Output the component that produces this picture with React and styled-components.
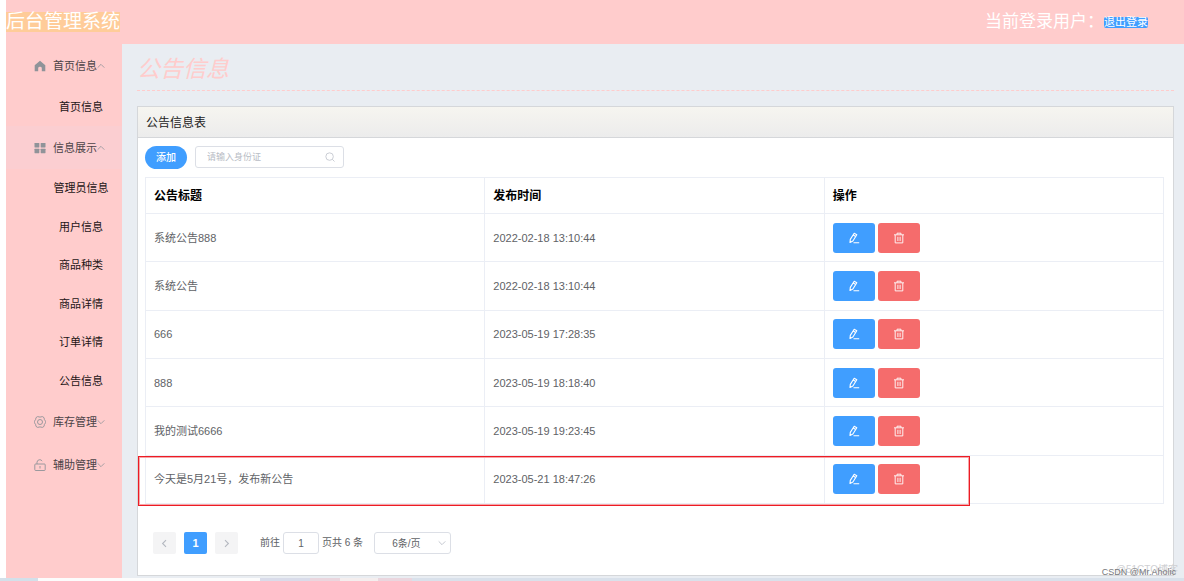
import React, { useState } from "react";
import styled, { createGlobalStyle, css } from "styled-components";

const GlobalStyle = createGlobalStyle`
  * {
    box-sizing: border-box;
  }

  body {
    margin: 0;
    background: #ffffff;
    font-family: "Liberation Sans", "Noto Sans CJK SC", sans-serif;
    font-size: 11px;
    line-height: 16px;
    color: #606266;
  }

  button,
  input,
  select {
    font-family: inherit;
  }
`;

const Page = styled.div`
  position: relative;
  display: flex;
  flex-direction: column;
  min-height: 100vh;
  overflow: hidden;
`;

const Header = styled.header`
  display: flex;
  align-items: center;
  justify-content: space-between;
  height: 44px;
  margin-left: 6px;
  padding-right: 36px;
  background: #ffcccc;
  color: #ffffff;
`;

const SystemTitle = styled.h1`
  margin: 0;
  font-size: 19px;
  font-weight: 400;
  line-height: 20px;
  background: #ffcc99;
`;

const UserInfo = styled.div`
  display: flex;
  align-items: center;
  font-size: 17px;
  line-height: 20px;
`;

const LogoutButton = styled.button`
  padding: 0;
  border: 0;
  border-radius: 2px;
  background: #409eff;
  color: #ffffff;
  font-size: 11px;
  line-height: 11px;
`;

const Body = styled.div`
  display: flex;
  flex: 1;
  margin-left: 6px;
`;

const Sidebar = styled.nav`
  flex: 0 0 116px;
  background: #ffcccc;
`;

const MenuTitle = styled.button`
  display: flex;
  align-items: center;
  width: 100%;
  height: 43px;
  padding: 0 0 0 28px;
  border: 0;
  background: ${(props) => (props.$active ? "#fbced1" : "transparent")};
  color: #4b4347;
  font-size: 11px;
  line-height: 16px;

  svg:first-child {
    margin-right: 7px;
  }
`;

const SubMenu = styled.ul`
  display: grid;
  grid-auto-rows: 1fr;
  height: ${(props) => props.$height}px;
  margin: 0;
  padding: 0 0 0 34px;
  list-style: none;
`;

const SubMenuItem = styled.li`
  display: flex;
  align-items: center;
  justify-content: center;

  a {
    color: #1c1416;
    text-decoration: none;
  }
`;

const Main = styled.main`
  flex: 1;
  min-width: 0;
  padding: 0 10px 2px 15px;
  background: #e9edf2;
`;

const PageTitle = styled.h2`
  margin: 0 0 15px;
  padding: 9px 0 5px;
  border-bottom: 1px dashed #ffcccc;
  color: #ffcccc;
  font-size: 23px;
  font-style: italic;
  font-weight: 400;
  line-height: 32px;
`;

const Card = styled.section`
  border: 1px solid #d5d7da;
  background: #ffffff;
`;

const CardHeader = styled.h3`
  margin: 0;
  padding: 2px 8px 0;
  border-bottom: 1px solid #d5d7da;
  background: linear-gradient(#f6f5f0, #ececec);
  color: #222222;
  font-size: 12px;
  font-weight: 400;
  line-height: 28px;
`;

const CardBody = styled.div`
  padding: 8px 9px 21px 7px;
`;

const Toolbar = styled.div`
  display: flex;
  align-items: flex-start;
  gap: 8px;
  margin-bottom: 8px;
`;

const AddButton = styled.button`
  width: 42px;
  height: 23px;
  padding: 0;
  border: 0;
  border-radius: 12px;
  background: #409eff;
  color: #ffffff;
  font-size: 10px;
  font-weight: 500;
  line-height: 20px;
`;

const SearchBox = styled.label`
  display: flex;
  align-items: center;
  width: 149px;
  height: 22px;
  padding: 0 8px 0 11px;
  border: 1px solid #dcdfe6;
  border-radius: 3px;
  color: #c0c4cc;
`;

const SearchInput = styled.input`
  flex: 1;
  min-width: 0;
  padding: 0;
  border: 0;
  outline: 0;
  background: transparent;
  font-size: 9px;

  &::placeholder {
    color: #b8bcc5;
  }
`;

const TableWrapper = styled.div`
  position: relative;
`;

const Table = styled.table`
  width: 100%;
  height: 327px;
  table-layout: fixed;
  border-collapse: collapse;

  th,
  td {
    padding: 0 8px;
    border: 1px solid #ebeef5;
    text-align: left;
  }

  th {
    height: 36px;
    color: #000000;
    font-size: 12px;
    font-weight: 700;
  }
`;

const Actions = styled.div`
  display: flex;
  gap: 3px;
`;

const IconButton = styled.button`
  display: flex;
  align-items: center;
  justify-content: center;
  width: 42px;
  height: 30px;
  padding: 0;
  border: 0;
  border-radius: 3px;
  color: #ffffff;
  background: ${(props) => (props.$danger ? "#f56c6c" : "#409eff")};
`;

const RowMarker = styled.div`
  position: absolute;
  left: -7px;
  right: 19%;
  bottom: -2px;
  height: 50px;
  border: 1px solid #ec1c24;
  box-shadow: inset 0 0 0 1px #f8a5a8;
  pointer-events: none;
`;

const Pagination = styled.div`
  display: flex;
  align-items: center;
  margin-top: 28px;
  padding-left: 8px;
  font-size: 10px;
`;

const PageButton = styled.button`
  display: flex;
  align-items: center;
  justify-content: center;
  width: 23px;
  height: 22px;
  margin-right: 8px;
  padding: 0;
  border: 0;
  border-radius: 2px;
  background: #f4f4f5;
  color: #b4b8c0;
  font-size: 11px;
  font-weight: 700;

  ${(props) =>
    props.$current &&
    css`
      background: #409eff;
      color: #ffffff;
    `}
`;

const Jumper = styled.label`
  display: flex;
  align-items: center;
  gap: 3px;
  margin: 0 11px 0 14px;
`;

const JumperInput = styled.input`
  width: 36px;
  height: 22px;
  padding: 0;
  border: 1px solid #dcdfe6;
  border-radius: 3px;
  color: #606266;
  font-size: 10px;
  text-align: center;
`;

const SizeSelect = styled.div`
  position: relative;
  color: #c0c4cc;

  select {
    width: 77px;
    height: 22px;
    padding: 0 0 0 17px;
    appearance: none;
    border: 1px solid #dcdfe6;
    border-radius: 3px;
    background: #ffffff;
    color: #606266;
    font-size: 10px;
  }

  svg {
    position: absolute;
    top: 7px;
    right: 5px;
    pointer-events: none;
  }
`;

const Taskbar = styled.footer`
  display: flex;
  height: 3px;
  background: #d9e1eb;
`;

const TaskbarPart = styled.div`
  flex: 0 0 ${(props) => props.$width}px;
  background: ${(props) => props.$color};
`;

const Watermark = styled.span`
  position: absolute;
  right: 8px;
  bottom: 1px;
  color: #77787b;
  font-size: 9px;
  white-space: nowrap;
`;

const SiteWatermark = styled(Watermark)`
  right: 6px;
  bottom: 3px;
  color: #cfd0d3;
  font-size: 10px;
`;

const Icon = ({ size = 12, children, ...rest }) => (
  <svg
    width={size}
    height={size}
    viewBox="0 0 12 12"
    fill="none"
    stroke="currentColor"
    aria-hidden="true"
    {...rest}
  >
    {children}
  </svg>
);

const HomeIcon = () => (
  <Icon stroke="none">
    <path
      d="M6 .8 11.3 5.2V11.3H7.8V8.2Q7.8 6.8 6 6.8T4.2 8.2V11.3H.7V5.2Z"
      fill="#909399"
    />
  </Icon>
);

const GridIcon = () => (
  <Icon stroke="none" fill="#909399">
    <rect x=".5" y="1" width="4.8" height="4.4" rx=".4" />
    <rect x="6.7" y="1" width="4.8" height="4.4" rx=".4" />
    <rect x=".5" y="6.8" width="4.8" height="4.4" rx=".4" />
    <rect x="6.7" y="6.8" width="4.8" height="4.4" rx=".4" />
  </Icon>
);

const SettingIcon = () => (
  <Icon stroke="#909399" strokeWidth=".9" strokeLinejoin="round">
    <path d="M3.6.6Q6 1.6 8.4.6L10 1.6Q10.1 4 11.6 5.2V6.8Q10.1 8 10 10.4L8.4 11.4Q6 10.4 3.6 11.4L2 10.4Q1.9 8 .4 6.8V5.2Q1.9 4 2 1.6Z" />
    <circle cx="6" cy="6" r="2.5" />
  </Icon>
);

const UnlockIcon = () => (
  <Icon stroke="#909399" strokeWidth=".9">
    <rect x=".8" y="5" width="10.4" height="6.5" rx=".8" />
    <path d="M3 5V3.2A2.8 2.8 0 0 1 8.2 2.1M6 7V9.5" />
  </Icon>
);

const ArrowIcon = ({ open }) => (
  <Icon size={8} stroke="#909399" strokeWidth="1.2">
    <path d={open ? "M1 8.5 6 3.5 11 8.5" : "M1 3.5 6 8.5 11 3.5"} />
  </Icon>
);

const EditIcon = () => (
  <Icon strokeWidth="1.1" strokeLinejoin="round">
    <path d="M6.2 1.2 8.8 2.7 4.9 9 2 10.5 2.3 7.4ZM5.2 3 7.7 4.5M5.5 10.7H11.2" />
  </Icon>
);

const DeleteIcon = () => (
  <Icon strokeWidth=".9">
    <path d="M1 2.8H11M4 2.6V1.2H8V2.6M2.2 3V10.9H9.8V3M4.9 4.8V9M7.1 4.8V9" />
  </Icon>
);

const menus = [
  { title: "首页信息", icon: HomeIcon, open: true, height: 39, items: ["首页信息"] },
  {
    title: "信息展示",
    icon: GridIcon,
    open: true,
    active: true,
    height: 231,
    items: ["管理员信息", "用户信息", "商品种类", "商品详情", "订单详情", "公告信息"],
  },
  { title: "库存管理", icon: SettingIcon, items: [] },
  { title: "辅助管理", icon: UnlockIcon, items: [] },
];

const notices = [
  { title: "系统公告888", time: "2022-02-18 13:10:44" },
  { title: "系统公告", time: "2022-02-18 13:10:44" },
  { title: "666", time: "2023-05-19 17:28:35" },
  { title: "888", time: "2023-05-19 18:18:40" },
  { title: "我的测试6666", time: "2023-05-19 19:23:45" },
  { title: "今天是5月21号，发布新公告", time: "2023-05-21 18:47:26" },
];

const App = () => {
  const [keyword, setKeyword] = useState("");
  const [page, setPage] = useState("1");

  return (
    <>
      <GlobalStyle />
      <Page>
        <Header>
          <SystemTitle>后台管理系统</SystemTitle>
          <UserInfo>
            当前登录用户：
            <LogoutButton>退出登录</LogoutButton>
          </UserInfo>
        </Header>
        <Body>
          <Sidebar>
            {menus.map(({ title, icon: MenuIcon, open, active, height, items }) => (
              <div key={title}>
                <MenuTitle $active={active}>
                  <MenuIcon />
                  {title}
                  <ArrowIcon open={open} />
                </MenuTitle>
                {open && (
                  <SubMenu $height={height}>
                    {items.map((item) => (
                      <SubMenuItem key={item}>
                        <a href="#">{item}</a>
                      </SubMenuItem>
                    ))}
                  </SubMenu>
                )}
              </div>
            ))}
          </Sidebar>
          <Main>
            <PageTitle>公告信息</PageTitle>
            <Card>
              <CardHeader>公告信息表</CardHeader>
              <CardBody>
                <Toolbar>
                  <AddButton>添加</AddButton>
                  <SearchBox>
                    <SearchInput
                      aria-label="请输入身份证"
                      placeholder="请输入身份证"
                      value={keyword}
                      onChange={(e) => setKeyword(e.target.value)}
                    />
                    <Icon size={10}>
                      <circle cx="5.5" cy="5.5" r="4.5" />
                      <path d="M8.8 8.8 11.4 11.4" />
                    </Icon>
                  </SearchBox>
                </Toolbar>
                <TableWrapper>
                  <Table>
                    <thead>
                      <tr>
                        <th>公告标题</th>
                        <th>发布时间</th>
                        <th>操作</th>
                      </tr>
                    </thead>
                    <tbody>
                      {notices.map((notice) => (
                        <tr key={notice.title}>
                          <td>{notice.title}</td>
                          <td>{notice.time}</td>
                          <td>
                            <Actions>
                              <IconButton aria-label="编辑">
                                <EditIcon />
                              </IconButton>
                              <IconButton $danger aria-label="删除">
                                <DeleteIcon />
                              </IconButton>
                            </Actions>
                          </td>
                        </tr>
                      ))}
                    </tbody>
                  </Table>
                  <RowMarker />
                </TableWrapper>
                <Pagination>
                  <PageButton aria-label="上一页">
                    <Icon size={9} strokeWidth="1.5">
                      <path d="M8 1.5 3.5 6 8 10.5" />
                    </Icon>
                  </PageButton>
                  <PageButton $current>1</PageButton>
                  <PageButton aria-label="下一页">
                    <Icon size={9} strokeWidth="1.5">
                      <path d="M4 1.5 8.5 6 4 10.5" />
                    </Icon>
                  </PageButton>
                  <Jumper>
                    前往
                    <JumperInput
                      value={page}
                      onChange={(e) => setPage(e.target.value)}
                    />
                    页共 6 条
                  </Jumper>
                  <SizeSelect>
                    <select aria-label="每页条数">
                      <option>6条/页</option>
                    </select>
                    <Icon size={8} strokeWidth="1.4">
                      <path d="M1 3.5 6 8.5 11 3.5" />
                    </Icon>
                  </SizeSelect>
                </Pagination>
              </CardBody>
            </Card>
          </Main>
        </Body>
        <Taskbar>
          <TaskbarPart $width={38} $color="#d3e0ea" />
          <TaskbarPart $width={222} $color="#fcfcfc" />
          <TaskbarPart $width={50} $color="#d9dcea" />
          <TaskbarPart $width={30} $color="#ead6de" />
          <TaskbarPart $width={38} $color="#f4eeee" />
          <TaskbarPart $width={34} $color="#ead6de" />
        </Taskbar>
        <SiteWatermark>@51CTO博客</SiteWatermark>
        <Watermark>CSDN @Mr.Aholic</Watermark>
      </Page>
    </>
  );
};

export default App;
